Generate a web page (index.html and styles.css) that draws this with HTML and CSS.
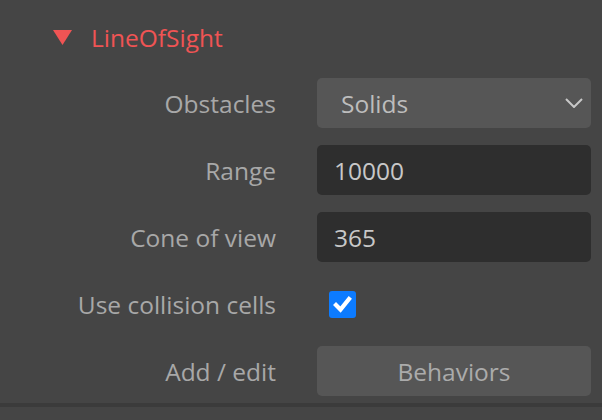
FILE: index.html
```html
<!DOCTYPE html>
<html>
<head>
<meta charset="utf-8">
<link rel="stylesheet" href="styles.css">
</head>
<body>
<div class="panel">
  <div class="header">
    <svg class="tri" width="19" height="15" viewBox="0 0 19 15"><polygon points="0,0 19,0 9.5,15" fill="#f05454"/></svg>
    <span class="title">LineOfSight</span>
  </div>
  <div class="grid">
    <div class="label">Obstacles</div>
    <div class="select">
      <span>Solids</span>
      <svg class="chev" width="18" height="10" viewBox="0 0 18 10"><polyline points="1,1 9,9 17,1" fill="none" stroke="#c8c8c8" stroke-width="2"/></svg>
    </div>
    <div class="label">Range</div>
    <div class="input">10000</div>
    <div class="label">Cone of view</div>
    <div class="input">365</div>
    <div class="label">Use collision cells</div>
    <div class="check-cell">
      <span class="check">
        <svg width="27" height="27" viewBox="0 0 27 27"><polyline points="7,14 11.5,18.5 20,8" fill="none" stroke="#fff" stroke-width="4.2" stroke-linecap="square"/></svg>
      </span>
    </div>
    <div class="label">Add / edit</div>
    <div class="button">Behaviors</div>
  </div>
  <div class="divider"></div>
</div>
</body>
</html>
```
FILE: styles.css
```css
html, body {
  margin: 0;
  padding: 0;
  background: #454545;
  font-family: "Open Sans", "Noto Sans", sans-serif;
}
.panel {
  width: 602px;
  height: 420px;
  overflow: hidden;
}
.header {
  display: flex;
  align-items: center;
  height: 40px;
  padding: 17px 0 0 53px;
  gap: 19px;
}
.tri {
  display: block;
}
.title {
  color: #f05454;
  font-size: 24.5px;
}
.grid {
  display: grid;
  grid-template-columns: 276px 274px;
  grid-auto-rows: 50px;
  column-gap: 41px;
  row-gap: 17px;
  margin-top: 21px;
}
.label {
  display: flex;
  align-items: center;
  justify-content: flex-end;
  color: #a8a8a8;
  font-size: 24.5px;
}
.select {
  display: flex;
  align-items: center;
  justify-content: space-between;
  background: #565656;
  border-radius: 5px;
  padding: 0 8px 0 24px;
  color: #bdbdbd;
  font-size: 24.5px;
}
.input {
  display: flex;
  align-items: center;
  background: #2e2e2e;
  border-radius: 5px;
  padding: 0 17px;
  color: #c8c8c8;
  font-size: 24.5px;
}
.check-cell {
  display: flex;
  align-items: center;
  padding-left: 12px;
}
.check {
  width: 27px;
  height: 27px;
  background: #0c7bff;
  border-radius: 3px;
  display: block;
}
.check svg { display: block; }
.button {
  display: flex;
  align-items: center;
  justify-content: center;
  background: #565656;
  border-radius: 5px;
  color: #ababab;
  font-size: 24.5px;
}
.divider {
  margin-top: 7px;
  height: 4px;
  background: #3b3b3b;
}
```
